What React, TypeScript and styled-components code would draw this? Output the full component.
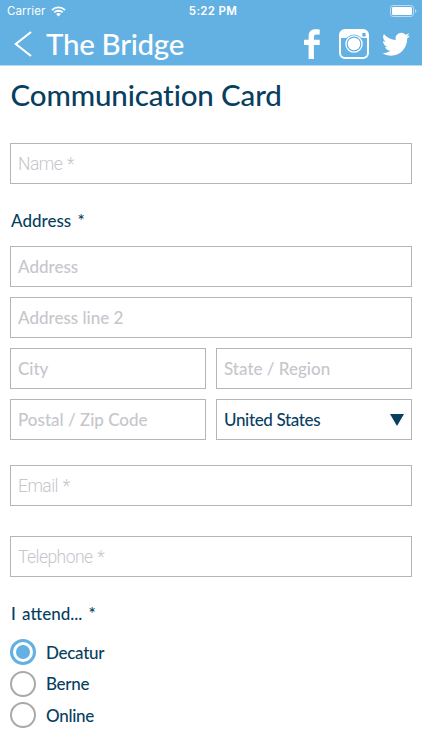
import React from 'react';
import styled, { createGlobalStyle } from 'styled-components';

const navy = '#083f5f';
const sky = '#63b0e2';

const GlobalStyle = createGlobalStyle`
  * { box-sizing: border-box; }
  body { margin: 0; background: #fff; overflow: hidden; }
`;

const Screen = styled.div`
  width: 422px;
  height: 750px;
  overflow: hidden;
  background: #fff;
  color: ${navy};
  font-family: Lato, 'Open Sans', sans-serif;
`;

const Header = styled.header`
  height: 66px;
  background: ${sky};
  border-bottom: 1px solid #b5daf1;
  color: #fff;
`;

const StatusBar = styled.div`
  display: grid;
  grid-template-columns: 1fr auto 1fr;
  align-items: center;
  height: 22px;
  padding: 0 5px 0 7px;
  font-family: Inter, sans-serif;
  font-size: 11.5px;
`;

const Carrier = styled.div`
  display: flex;
  align-items: center;
  gap: 6px;
  letter-spacing: 0.1px;
`;

const Clock = styled.div`
  padding-left: 2px;
  font-weight: 600;
  letter-spacing: 0.3px;
`;

const Battery = styled.svg`
  justify-self: end;
`;

const NavBar = styled.div`
  display: flex;
  align-items: center;
  height: 43px;
  padding: 0 12px 0 14px;
`;

const NavTitle = styled.div`
  flex: 1;
  margin-left: 14px;
  font-size: 29.5px;
  font-weight: 500;
  line-height: 43px;
  letter-spacing: -0.3px;
`;

const Socials = styled.div`
  display: flex;
  align-items: center;
`;

const Content = styled.main`
  padding: 0 10px;
`;

const Title = styled.h1`
  margin: 0;
  height: 77px;
  padding-left: 0.5px;
  font-size: 29.5px;
  font-weight: 500;
  line-height: 58px;
  letter-spacing: -0.13px;
`;

const Label = styled.div<{ $height: number }>`
  height: ${p => p.$height}px;
  padding-left: 1px;
  font-size: 17px;
  font-weight: 500;
  line-height: 26px;
  letter-spacing: 0;
  word-spacing: 2px;
`;

const Field = styled.div<{ $light?: boolean; $value?: boolean; $after?: number }>`
  display: flex;
  align-items: center;
  justify-content: space-between;
  height: 41px;
  margin-bottom: ${p => p.$after ?? 0}px;
  padding: 0 7px;
  border: 1px solid #b4b5b7;
  color: ${p => (p.$value ? navy : '#c6c6cc')};
  font-family: ${p => (p.$light ? 'Roboto, sans-serif' : 'inherit')};
  font-size: ${p => (p.$light ? 17.5 : 17)}px;
  font-weight: ${p => (p.$light ? 300 : 500)};
  letter-spacing: ${p => (p.$light ? -0.55 : p.$value ? -0.35 : 0)}px;
  word-spacing: ${p => (p.$light ? 1 : 0)}px;
`;

const AddressGrid = styled.div`
  display: grid;
  grid-template-columns: 1fr 1fr;
  gap: 10px;
  margin-bottom: 25px;
`;

const WideField = styled(Field)`
  grid-column: 1 / -1;
`;

const Options = styled.div`
  display: flex;
  flex-direction: column;
  gap: 5.5px;
`;

const Option = styled.div`
  display: flex;
  align-items: center;
  gap: 10px;
  height: 26px;
  font-size: 17px;
  font-weight: 500;
  letter-spacing: -0.3px;
`;

const Radio = styled.span<{ $on?: boolean }>`
  display: grid;
  place-items: center;
  width: 26px;
  height: 26px;
  border: ${p => (p.$on ? `3.4px solid ${sky}` : '2px solid #a9a9a9')};
  border-radius: 50%;
  &::after {
    content: '';
    width: 14px;
    height: 14px;
    border-radius: 50%;
    background: ${p => (p.$on ? sky : 'transparent')};
  }
`;

const Wifi = () => (
  <svg width="15" height="11" viewBox="0 0 15 11" fill="none" stroke="#fff" strokeWidth="1.9">
    <path d="M1 4.1a9.2 9.2 0 0 1 13 0M3.3 6.4a6 6 0 0 1 8.4 0" />
    <path d="M5.1 8.1a3.4 3.4 0 0 1 4.8 0L7.5 10.5z" fill="#fff" stroke="none" />
  </svg>
);

const Facebook = () => (
  <svg width="16" height="30" viewBox="0 0 16 30" fill="#fff">
    <path d="M4.6 30V15.9H0v-5.1h4.6V7.5C4.6 2.5 7.2.2 11.3.2c2 0 3.8.1 4.4.2v5h-3.1c-2.2 0-2.7 1-2.7 2.7v2.7h5.8v5.1H9.9V30z" />
  </svg>
);

const Instagram = () => (
  <svg width="30" height="30" viewBox="0 0 30 30">
    <rect x="1" y="1" width="28" height="28" rx="5" fill="none" stroke="#fff" strokeWidth="2" />
    <path d="M1 9V6a5 5 0 0 1 5-5h18a5 5 0 0 1 5 5v3z" fill="#fff" />
    <circle cx="15" cy="15" r="9.4" fill={sky} />
    <circle cx="15" cy="15" r="8.1" fill="none" stroke="#fff" strokeWidth="1.3" />
    <circle cx="15" cy="15" r="6.2" fill="#fff" />
    <rect x="23.3" y="4" width="3.3" height="3.5" rx=".6" fill={sky} />
  </svg>
);

const Twitter = () => (
  <svg width="28" height="24" viewBox="0 1.5 24 20.5" preserveAspectRatio="none" fill="#fff">
    <path d="M23.95 4.57a10 10 0 0 1-2.82.77 4.96 4.96 0 0 0 2.16-2.72c-.95.55-2 .96-3.13 1.18a4.92 4.92 0 0 0-8.38 4.48A13.93 13.93 0 0 1 1.64 3.16a4.92 4.92 0 0 0 1.52 6.57 4.9 4.9 0 0 1-2.23-.61v.06a4.92 4.92 0 0 0 3.95 4.83 5 5 0 0 1-2.21.08 4.94 4.94 0 0 0 4.6 3.42A9.87 9.87 0 0 1 0 19.54a14 14 0 0 0 7.55 2.21c9.05 0 14-7.5 14-13.98 0-.21 0-.42-.02-.63a9.94 9.94 0 0 0 2.42-2.57z" />
  </svg>
);

const InstagramSlot = styled.div`
  display: flex;
  margin: 0 13px 0 19px;
`;

export default function App() {
  return (
    <>
      <GlobalStyle />
      <Screen>
        <Header>
          <StatusBar>
            <Carrier>Carrier <Wifi /></Carrier>
            <Clock>5:22 PM</Clock>
            <Battery width="27" height="12" viewBox="0 0 27 12">
              <rect x=".5" y=".5" width="23" height="11" rx="2.6" fill="none" stroke="#b9dcf2" />
              <rect x="2" y="2" width="20" height="8" rx="1.2" fill="#fff" />
              <path d="M25 4v4q1.4-.6 1.4-2T25 4" fill="#b9dcf2" />
            </Battery>
          </StatusBar>
          <NavBar>
            <svg width="18" height="26" viewBox="0 0 18 26" fill="none" stroke="#fff" strokeWidth="2.1">
              <path d="M17 1L1.8 13 17 25" />
            </svg>
            <NavTitle>The Bridge</NavTitle>
            <Socials>
              <Facebook />
              <InstagramSlot><Instagram /></InstagramSlot>
              <Twitter />
            </Socials>
          </NavBar>
        </Header>
        <Content>
          <Title>Communication Card</Title>
          <Field $light $after={24}>Name *</Field>
          <Label $height={38}>Address *</Label>
          <AddressGrid>
            <WideField>Address</WideField>
            <WideField>Address line 2</WideField>
            <Field>City</Field>
            <Field>State / Region</Field>
            <Field>Postal / Zip Code</Field>
            <Field $value>
              United States
              <svg width="14" height="12" viewBox="0 0 14 12" fill={navy}><path d="M0 0h14L7 12z" /></svg>
            </Field>
          </AddressGrid>
          <Field $light $after={30}>Email *</Field>
          <Field $light $after={24}>Telephone *</Field>
          <Label $height={38}>I attend... *</Label>
          <Options>
            <Option><Radio $on />Decatur</Option>
            <Option><Radio />Berne</Option>
            <Option><Radio />Online</Option>
          </Options>
        </Content>
      </Screen>
    </>
  );
}
